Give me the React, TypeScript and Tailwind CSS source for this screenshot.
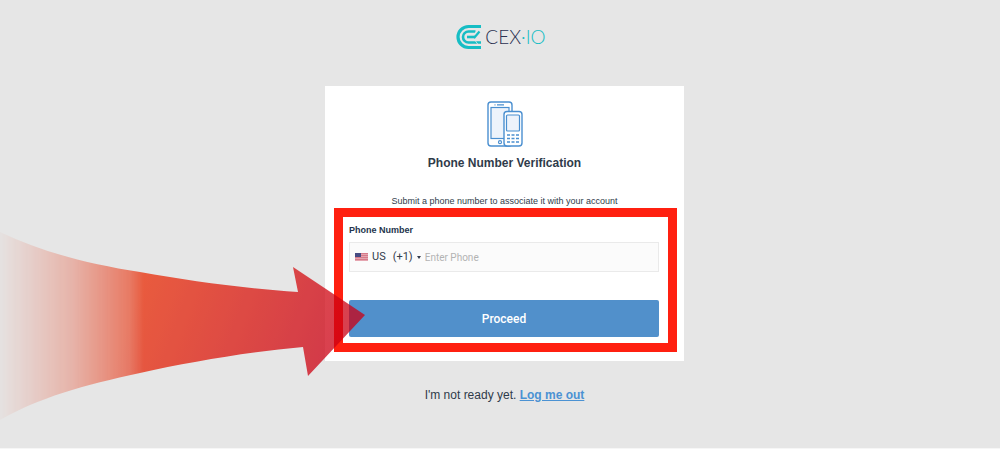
import type { FormEvent } from 'react';

function Logo() {
  return (
    <a href="#" aria-label="CEX.IO" className="flex h-6 items-center gap-1">
      <svg width="26" height="26" viewBox="0 0 26 26" fill="none" stroke="#16bdc4">
        <path d="M26 2.500H13.500A10.500 10.500 0 0 0 13.500 23.500H26" strokeWidth="3.200" />
        <path d="M20.500 7.500H13.500A5.500 5.500 0 0 0 13.500 18.500H26" strokeWidth="2.600" />
        <path d="M12 13H20" strokeWidth="2.600" />
        <path d="M24.500 7.500L19 14" strokeWidth="2.200" />
        <path d="M22.500 6L18.500 11M19 15L23 20.500" stroke="#e6e6e6" strokeWidth="0.800" />
      </svg>
      <span className="font-[Lato,sans-serif] text-[19px] font-light leading-6 text-[#2b3050]">
        CEX<span className="text-[#16bdc4]">·IO</span>
      </span>
    </a>
  );
}

function PhonesIcon() {
  return (
    <svg width="36" height="46" viewBox="0 0 36 46" fill="none" stroke="#4a8fd0" strokeWidth="1.4">
      <rect x="1" y="1" width="24" height="44" rx="3" fill="#fff" />
      <rect x="4" y="6.500" width="18" height="31" fill="#edf3fb" strokeWidth="1.200" />
      <path d="M10 3.800H17M7.500 3.800H8.500" strokeWidth="1.200" />
      <circle cx="13" cy="41.200" r="1.500" strokeWidth="1.200" />
      <rect x="17" y="10.500" width="18" height="34.500" rx="3" fill="#fff" />
      <rect x="19.500" y="14" width="13" height="16" rx="1" fill="#edf3fb" strokeWidth="1.200" />
      <path
        d="M20 34H23M24.500 34H27.500M29 34H32M20 37.500H23M24.500 37.500H27.500M29 37.500H32M20 41H23M24.500 41H27.500M29 41H32"
        strokeWidth="1.700"
      />
    </svg>
  );
}

function UsFlag() {
  return (
    <svg width="13" height="8" viewBox="0 0 13 8" className="shrink-0">
      <rect width="13" height="8" fill="#e5a5b0" />
      <path d="M0 .5H13M0 2.500H13M0 4.500H13M0 6.500H13" stroke="#d67a89" strokeWidth="1" />
      <rect width="6" height="4" fill="#474b82" />
    </svg>
  );
}

function Arrow() {
  return (
    <svg
      width="366"
      height="192"
      viewBox="0 0 366 192"
      className="pointer-events-none absolute left-0 top-[230px]"
      aria-hidden="true"
    >
      <defs>
        <linearGradient id="arrow-body" gradientUnits="userSpaceOnUse" x1="140" y1="60" x2="330" y2="130">
          <stop offset="0" stopColor="#e92c06" />
          <stop offset="1" stopColor="#cb0014" />
        </linearGradient>
        <linearGradient id="arrow-fade" gradientUnits="userSpaceOnUse" x1="0" y1="0" x2="144" y2="0">
          <stop offset="0" stopColor="#fff" stopOpacity="0.02" />
          <stop offset="0.5" stopColor="#fff" stopOpacity="0.27" />
          <stop offset="0.9" stopColor="#fff" stopOpacity="0.58" />
          <stop offset="1" stopColor="#fff" stopOpacity="0.75" />
        </linearGradient>
        <mask id="arrow-mask" maskUnits="userSpaceOnUse" x="0" y="0" width="366" height="192" style={{ maskType: 'alpha' }}>
          <rect width="366" height="192" fill="url(#arrow-fade)" />
        </mask>
      </defs>
      <path
        d="M0 2C42 22 88 34 140 42C190 51 240 58 298 62L293 37L365 85L308 146L303 117C248 122 190 132 140 143C84 155 38 168 0 190Z"
        fill="url(#arrow-body)"
        mask="url(#arrow-mask)"
      />
    </svg>
  );
}

export default function App() {
  const handleSubmit = (e: FormEvent) => e.preventDefault();

  return (
    <main className="relative flex min-h-screen flex-col items-center border-b border-[#f6f6f6] bg-[#e6e6e6] pl-[9px] font-['Liberation_Sans',sans-serif] text-[#2f3b4a]">
      <header className="pr-2 pt-[25px]">
        <Logo />
      </header>

      <section className="mt-[37px] flex w-full max-w-[359px] flex-col bg-white pb-[9px] pt-[15px]">
        <div className="flex flex-col items-center text-center">
          <PhonesIcon />
          <h1 className="mt-2 text-[12px] font-bold leading-4">Phone Number Verification</h1>
          <p className="mt-6 text-[9px] leading-3">Submit a phone number to associate it with your account</p>
        </div>

        {/* Highlighted form */}
        <form
          onSubmit={handleSubmit}
          className="ml-[9px] mr-[7px] mt-px flex flex-col border-9 border-[#ff2010] pb-[6px] pl-[6px] pr-[9px] pt-[7px]"
        >
          <label htmlFor="phone" className="text-[9px] font-bold leading-3 text-[#24344d]">
            Phone Number
          </label>
          <div className="mt-[6px] flex h-[30px] items-center border border-[#eaeaea] bg-[#fbfbfb] pl-[5px] font-[Roboto,sans-serif]">
            <button type="button" aria-label="Country code" className="flex items-center text-[11px] text-[#333c4c]">
              <UsFlag />
              <span className="ml-1">US</span>
              <span className="ml-[7px]">(+1)</span>
              <svg width="4" height="3" viewBox="0 0 4 3" className="ml-1">
                <path d="M0 0H4L2 3Z" fill="#333c4c" />
              </svg>
            </button>
            <input
              id="phone"
              type="tel"
              placeholder="Enter Phone"
              className="ml-1 min-w-0 flex-1 bg-transparent text-[10px] outline-none placeholder:text-[#b3b3b3]"
            />
          </div>
          <button
            type="submit"
            className="mt-7 h-[37px] rounded-xs bg-[#5190cb] font-[Roboto,sans-serif] text-[12px] font-medium text-white"
          >
            Proceed
          </button>
        </form>
      </section>

      <p className="mt-[26px] pb-6 text-[12px] leading-4">
        I'm not ready yet.{' '}
        <a href="#" className="font-bold text-[#4b92d3] underline">
          Log me out
        </a>
      </p>

      <Arrow />
    </main>
  );
}
